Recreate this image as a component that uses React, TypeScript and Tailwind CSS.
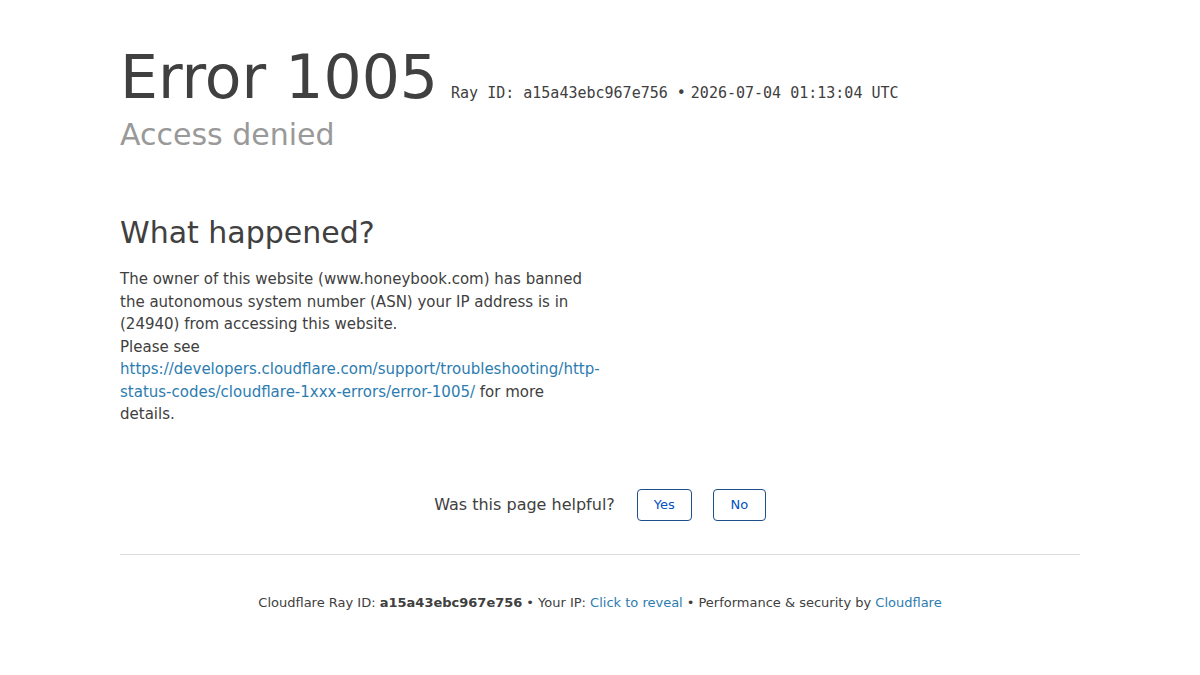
export default function App() {
  return (
    <div
      className="min-h-screen bg-white text-[#404040]"
      style={{ fontFamily: '"DejaVu Sans", "Liberation Sans", sans-serif' }}
    >
      <div className="mx-auto w-[960px] pt-[47px]">
        {/* Header */}
        <div className="flex items-baseline gap-[13px]">
          <h1 className="text-[60px] leading-[60px] font-normal">Error 1005</h1>
          <span
            className="text-[15px] text-[#404040]"
            style={{ fontFamily: '"DejaVu Sans Mono", "Liberation Mono", monospace' }}
          >
            Ray ID: a15a43ebc967e756 <span className="mr-[5px]">•</span>2026-07-04 01:13:04 UTC
          </span>
        </div>
        <h2 className="mt-[10px] text-[30px] leading-[36px] text-[#999999]">Access denied</h2>

        {/* What happened */}
        <section className="mt-[62px] w-[480px]">
          <h2 className="text-[30px] leading-[36px]">What happened?</h2>
          <p className="mt-[17px] text-[15px] leading-[22.5px]">
            The owner of this website (www.honeybook.com) has banned the autonomous system number (ASN)
            your IP address is in (24940) from accessing this website.
            <br />
            Please see{' '}
            <a href="#" className="text-[#2c7cb0]">
              https://developers.cloudflare.com/support/troubleshooting/http-status-codes/cloudflare-1xxx-errors/error-1005/
            </a>{' '}
            for more details.
          </p>
        </section>

        {/* Feedback */}
        <div className="mt-[63px] flex items-center justify-center">
          <span className="text-[16px] mr-[22px]">Was this page helpful?</span>
          <button className="h-8 w-[55px] rounded border border-[#1f4f8a] text-[13px] text-[#0051c3]">
            Yes
          </button>
          <button className="ml-[21px] h-8 w-[53px] rounded border border-[#1f4f8a] text-[13px] text-[#0051c3]">
            No
          </button>
        </div>

        {/* Footer */}
        <div className="mt-[33px] border-t border-[#dedede] pt-[38px] text-center text-[13px] text-[#404040]">
          Cloudflare Ray ID: <strong className="font-bold">a15a43ebc967e756</strong>
          <span className="mx-[4px]">•</span>
          Your IP: <a href="#" className="text-[#2c7cb0]">Click to reveal</a>
          <span className="mx-[4px]">•</span>
          Performance &amp; security by <a href="#" className="text-[#2c7cb0]">Cloudflare</a>
        </div>
      </div>
    </div>
  );
}
